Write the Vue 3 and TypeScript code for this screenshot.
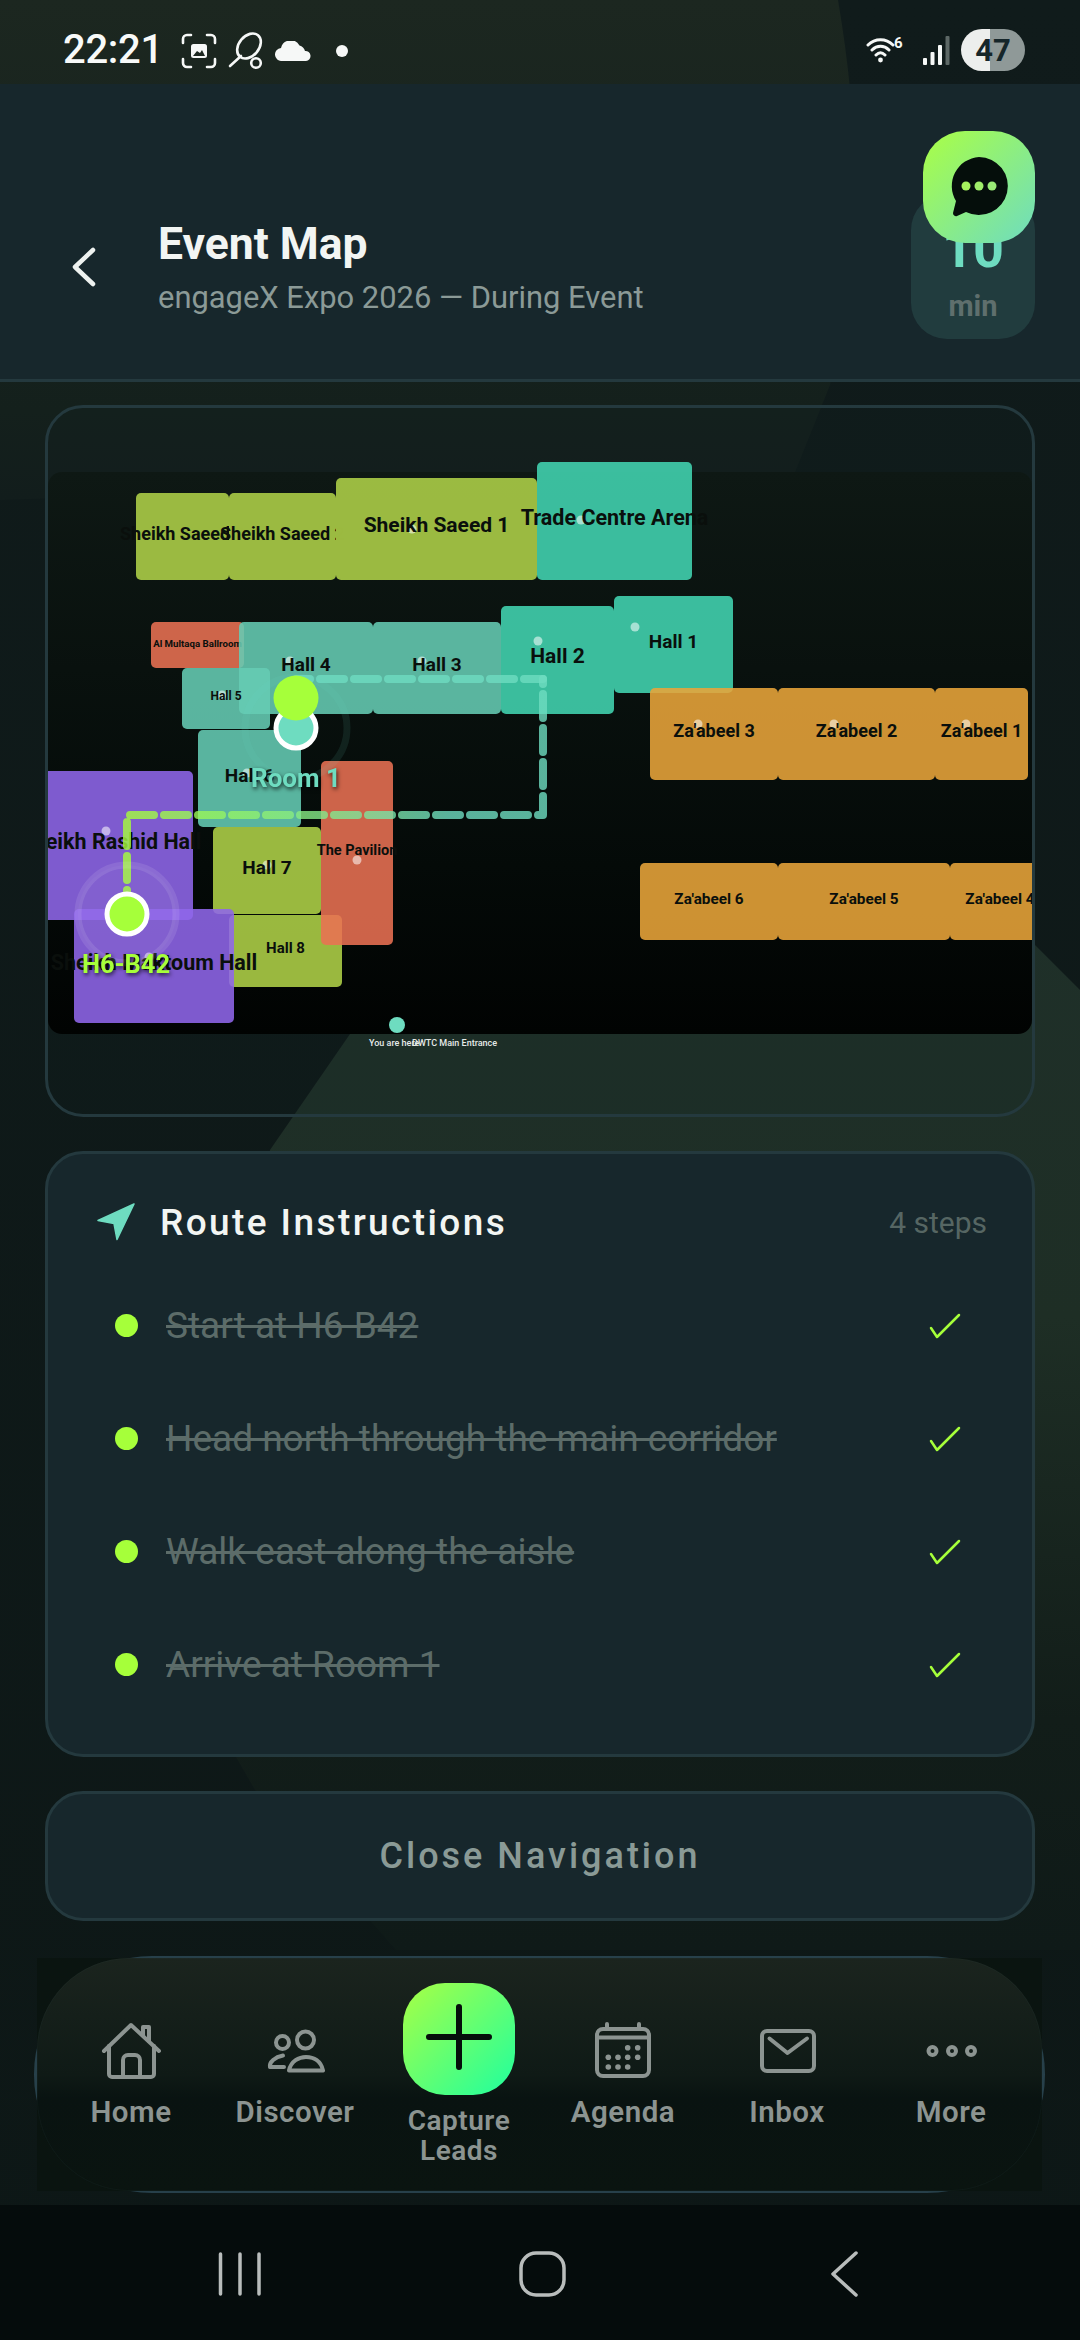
<script setup lang="ts">
interface Hall { n: string; x: number; y: number; w: number; h: number; c: string; s: number; dx?: number; dy?: number }
const OL = '#afd148', T1 = '#65ccb4', T2 = '#42d5b2', RD = '#e97153', PU = '#9066eb', AM = '#e9a53a'
const halls: Hall[] = [
  { n: 'Sheikh Saeed 3', x: 136, y: 493, w: 93, h: 87, c: OL, s: 18, dx: -999 },
  { n: 'Sheikh Saeed 2', x: 229, y: 493, w: 107, h: 87, c: OL, s: 18, dx: -999 },
  { n: 'Sheikh Saeed 1', x: 336, y: 478, w: 201, h: 102, c: OL, s: 21, dx: 412, dy: 529 },
  { n: 'Trade Centre Arena', x: 537, y: 462, w: 155, h: 118, c: T2, s: 21.5, dx: 581, dy: 520 },
  { n: 'Hall 1', x: 614, y: 596, w: 119, h: 97, c: T2, s: 19, dx: 635, dy: 627 },
  { n: 'Hall 2', x: 501, y: 606, w: 113, h: 108, c: T2, s: 21, dx: 538, dy: 641 },
  { n: 'Hall 3', x: 373, y: 622, w: 128, h: 92, c: T1, s: 19, dx: 422, dy: 661 },
  { n: 'Al Multaqa Ballroom', x: 151, y: 622, w: 93, h: 46, c: RD, s: 9.7, dx: -999 },
  { n: 'Hall 4', x: 239, y: 622, w: 134, h: 92, c: T1, s: 19, dx: 290, dy: 661 },
  { n: 'Hall 5', x: 182, y: 668, w: 88, h: 61, c: T1, s: 12, dx: 222, dy: 695 },
  { n: 'Hall 6', x: 198, y: 730, w: 103, h: 97, c: T1, s: 19, dx: 247, dy: 773 },
  { n: 'Sheikh Rashid Hall', x: 29, y: 771, w: 164, h: 149, c: PU, s: 21.5, dx: 106, dy: 831 },
  { n: 'Hall 7', x: 213, y: 827, w: 108, h: 87, c: OL, s: 19, dx: 267, dy: 865 },
  { n: 'Hall 8', x: 229, y: 915, w: 113, h: 72, c: OL, s: 15, dx: -999 },
  { n: 'The Pavilion', x: 321, y: 761, w: 72, h: 184, c: RD, s: 14.5, dx: 357, dy: 860 },
  { n: 'Sheikh Maktoum Hall', x: 74, y: 909, w: 160, h: 114, c: PU, s: 21.5, dx: 149, dy: 957 },
  { n: "Za'abeel 3", x: 650, y: 688, w: 128, h: 92, c: AM, s: 18, dx: 698, dy: 724 },
  { n: "Za'abeel 2", x: 778, y: 688, w: 157, h: 92, c: AM, s: 18, dx: 834, dy: 724 },
  { n: "Za'abeel 1", x: 935, y: 688, w: 93, h: 92, c: AM, s: 18, dx: 966, dy: 724 },
  { n: "Za'abeel 6", x: 640, y: 863, w: 138, h: 77, c: AM, s: 15.3, dx: -999 },
  { n: "Za'abeel 5", x: 778, y: 863, w: 172, h: 77, c: AM, s: 15.3, dx: -999 },
  { n: "Za'abeel 4", x: 950, y: 863, w: 100, h: 77, c: AM, s: 15.3, dx: -999 }
]
const steps = ['Start at H6-B42', 'Head north through the main corridor', 'Walk east along the aisle', 'Arrive at Room 1']
const calDots = [[34.7,25.7],[44.7,25.7],[15.3,35.3],[25,35.3],[34.7,35.3],[44.7,35.3],[15.3,45],[25,45],[34.7,45]]
</script>

<template>
  <div class="screen">
    <svg class="backdrop" width="1080" height="2340" viewBox="0 0 1080 2340" aria-hidden="true">
      <defs>
        <linearGradient id="bgTop" x1="0" y1="0" x2="0" y2="1">
          <stop offset="0" stop-color="#1c2720" />
          <stop offset="0.82" stop-color="#14201c" />
          <stop offset="1" stop-color="#121d1c" />
        </linearGradient>
        <linearGradient id="bgLow" x1="0" y1="0" x2="0" y2="1">
          <stop offset="0" stop-color="#1f302a" />
          <stop offset="0.45" stop-color="#1e2e25" />
          <stop offset="0.8" stop-color="#121d19" />
          <stop offset="1" stop-color="#0f1a18" />
        </linearGradient>
        <linearGradient id="bgLeft" x1="0" y1="0" x2="0" y2="1">
          <stop offset="0" stop-color="#101b1b" />
          <stop offset="1" stop-color="#0d1716" />
        </linearGradient>
      </defs>
      <rect width="1080" height="2340" fill="url(#bgLeft)" />
      <path d="M0 0H838Q860 130 852 220T830 385L795 472L0 500Z" fill="url(#bgTop)" />
      <path d="M1080 990L1035 945L800 800L350 1034L270 1150C240 1400 225 1650 236 1757L255 1790L396 1950H1080Z" fill="url(#bgLow)" />
    </svg>

    <div class="status">
      <div class="status-left">
        <span class="clock">22:21</span>
        <svg class="st-frame" width="36" height="36" viewBox="0 0 36 36" fill="none" stroke="#f6f8f7" stroke-width="2.6" stroke-linecap="round">
          <path d="M2 10V6a4 4 0 0 1 4-4h4M26 2h4a4 4 0 0 1 4 4v4M34 26v4a4 4 0 0 1-4 4h-4M10 34H6a4 4 0 0 1-4-4v-4" />
          <rect x="10" y="11" width="16" height="14" rx="2.5" fill="#f6f8f7" stroke="none" />
          <path d="M12 23l4-5 3 2 2-3 3 6z" fill="#1c2720" stroke="none" />
        </svg>
        <svg class="st-racket" width="36" height="38" viewBox="0 0 36 38" fill="none" stroke="#f6f8f7" stroke-width="2.6" stroke-linecap="round">
          <ellipse cx="21" cy="14" rx="14" ry="10" transform="rotate(-50 21 14)" />
          <path d="M13 24L2 34" />
          <circle cx="28" cy="31" r="4.8" />
        </svg>
        <svg class="st-cloud" width="36" height="20" viewBox="0 0 36 20" fill="#f6f8f7">
          <path d="M7 20a6.500 6.500 0 0 1-1-13 10 10 0 0 1 18.500-2.500A8 8 0 0 1 30 10a5 5 0 0 1 1 10z" />
        </svg>
        <span class="st-dot"></span>
      </div>
      <div class="status-right">
        <svg width="44" height="28" viewBox="0 0 44 28" fill="none" stroke="#f6f8f7" stroke-width="3" stroke-linecap="round">
          <path d="M2 9C9 2 20 2 27 9M6 14C11 9 18 9 23 14M10 19C13 16 16 16 19 19" />
          <circle cx="14.500" cy="24" r="2.400" fill="#f6f8f7" stroke="none" />
          <text x="28" y="12" class="wifi-six">6</text>
        </svg>
        <svg class="st-signal" width="28" height="30" viewBox="0 0 28 30">
          <rect x="1" y="23" width="4" height="7" rx="1" fill="#f6f8f7" />
          <rect x="8.500" y="17" width="4" height="13" rx="1" fill="#f6f8f7" />
          <rect x="16" y="10" width="4" height="20" rx="1" fill="#f6f8f7" />
          <rect x="23.500" y="1" width="4" height="29" rx="1" fill="#5d6866" />
        </svg>
        <div class="battery"><span>47</span></div>
      </div>
    </div>

    <header class="head">
      <svg class="back" width="26" height="40" viewBox="0 0 26 40" fill="none" stroke="#eef2f0" stroke-width="4.500" stroke-linecap="round" stroke-linejoin="round">
        <path d="M22 3L4 20L22 37" />
      </svg>
      <div class="titles">
        <h1>Event Map</h1>
        <p>engageX Expo 2026 — During Event</p>
      </div>
      <div class="timer">
        <strong>10</strong>
        <span>min</span>
      </div>
    </header>

    <button class="fab" aria-label="Chat">
      <svg width="112" height="112" viewBox="0 0 112 112">
        <path d="M56 26a29 29 0 1 1-13 55l-9 4a3 3 0 0 1-4-3l3-12A29 29 0 0 1 56 26z" fill="#050e0b" />
        <circle cx="43" cy="55" r="4.500" fill="#a6f25e" />
        <circle cx="56" cy="55" r="4.500" fill="#a0ee6a" />
        <circle cx="69" cy="55" r="4.500" fill="#9aea76" />
      </svg>
    </button>

    <main class="content">
      <section class="card map-card">
        <svg class="map" width="984" height="652" viewBox="48 462 984 652">
          <defs>
            <linearGradient id="mapBg" x1="0" y1="0" x2="0" y2="1">
              <stop offset="0" stop-color="#0e1814" />
              <stop offset="0.7" stop-color="#040a08" />
              <stop offset="1" stop-color="#010302" />
            </linearGradient>
            <linearGradient id="routeGrad" gradientUnits="userSpaceOnUse" x1="127" y1="0" x2="450" y2="0">
              <stop offset="0" stop-color="#a6ff3a" />
              <stop offset="1" stop-color="#6edcc0" />
            </linearGradient>
          </defs>
          <rect x="48" y="472" width="984" height="562" rx="14" fill="url(#mapBg)" />
          <g v-for="h in halls" :key="h.n">
            <rect :x="h.x" :y="h.y" :width="h.w" :height="h.h" rx="5" :fill="h.c" fill-opacity="0.88" />
            <circle v-if="h.dx !== -999" :cx="h.dx" :cy="h.dy" r="4.500" fill="#fff" fill-opacity="0.55" />
            <text
              class="hall-label"
              :x="h.x + h.w / 2"
              :y="h.y + h.h / 2 - h.s * 0.18"
              :font-size="h.s"
            >{{ h.n }}</text>
          </g>
          <path d="M127 914V815H543V679" fill="none" stroke="url(#routeGrad)" stroke-opacity="0.8" stroke-width="8" stroke-linecap="round" stroke-linejoin="round" stroke-dasharray="24 10" />
          <path d="M543 679H296V728" fill="none" stroke="#6edcc0" stroke-opacity="0.8" stroke-width="8" stroke-linecap="round" stroke-linejoin="round" stroke-dasharray="24 10" stroke-dashoffset="5" />
          <circle cx="296" cy="728" r="51" fill="none" stroke="#6edcc0" stroke-opacity="0.1" stroke-width="7" />
          <circle cx="296" cy="728" r="20" fill="#6edcc0" stroke="#fff" stroke-width="5" />
          <circle cx="296" cy="698" r="22.500" fill="#a6ff3a" />
          <circle cx="127" cy="914" r="49" fill="#fff" fill-opacity="0.03" stroke="#fff" stroke-opacity="0.1" stroke-width="7" />
          <circle cx="127" cy="914" r="20" fill="#a6ff3a" stroke="#fff" stroke-width="5" />
          <text class="pin-label room" x="296" y="778">Room 1</text>
          <text class="pin-label start" x="126" y="964">H6-B42</text>
          <circle cx="397" cy="1025" r="8" fill="#6edcc0" />
          <text class="tiny" x="369" y="1046">You are here</text>
          <text class="tiny" x="412" y="1046">DWTC Main Entrance</text>
        </svg>
      </section>

      <section class="card route-card">
        <div class="route-head">
          <svg class="route-arrow" width="38" height="38" viewBox="0 0 38 38">
            <path d="M37 1L1 17.500L17 20.500L20 36.500Z" fill="#6edcc0" stroke="#6edcc0" stroke-width="1.500" stroke-linejoin="round" />
          </svg>
          <h2>Route Instructions</h2>
          <span class="step-count">4 steps</span>
        </div>
        <ul class="steps">
          <li v-for="s in steps" :key="s">
            <i class="step-dot"></i>
            <span class="step-text">{{ s }}</span>
            <svg class="tick" width="32" height="26" viewBox="0 0 32 26" fill="none" stroke="#a6ff3a" stroke-width="2.500" stroke-linecap="round" stroke-linejoin="round">
              <path d="M2 15L8 24L30 2" />
            </svg>
          </li>
        </ul>
      </section>

      <button class="card close-btn">Close Navigation</button>
    </main>

    <nav class="tabbar">
      <div class="tabbar-plate">
        <div class="tabbar-inner">
          <div class="tab">
            <svg class="tab-icon" width="60" height="60" viewBox="0 0 60 60" fill="none" stroke="#8c9491" stroke-width="4" stroke-linecap="round" stroke-linejoin="round">
              <path d="M3 29L30 3L58 29" />
              <path d="M8 24V52a3 3 0 0 0 3 3H50a3 3 0 0 0 3-3V24" />
              <path d="M22 55V38a5 5 0 0 1 5-5h7a5 5 0 0 1 5 5V55" />
              <path d="M42 13V5h6V19" />
            </svg>
            <span>Home</span>
          </div>
          <div class="tab">
            <svg class="tab-icon" width="60" height="60" viewBox="0 0 60 60" fill="none" stroke="#8c9491" stroke-width="4" stroke-linecap="round" stroke-linejoin="round">
              <circle cx="17.500" cy="20.500" r="6.500" />
              <circle cx="40.500" cy="18" r="8.500" />
              <path d="M24 48.500C26 39 34 35 41 35C49 35 56 39 58 48.500Z" />
              <path d="M19 45H5C4 40 10 35 18 33.500" />
            </svg>
            <span>Discover</span>
          </div>
          <div class="tab capture">
            <div class="plus">
              <svg width="112" height="112" viewBox="0 0 112 112" stroke="#050e0b" stroke-width="6" stroke-linecap="round">
                <path d="M56 24V84M26 54H86" />
              </svg>
            </div>
            <span>Capture<br />Leads</span>
          </div>
          <div class="tab">
            <svg class="tab-icon" width="60" height="60" viewBox="0 0 60 60" fill="none" stroke="#8c9491" stroke-width="4" stroke-linecap="round" stroke-linejoin="round">
              <rect x="4" y="7" width="52" height="47" rx="6" />
              <path d="M4 15.500H56M14 2V7M46 2V7" />
              <circle v-for="(d, i) in calDots" :key="i" :cx="d[0]" :cy="d[1]" r="2.800" fill="#8c9491" stroke="none" />
            </svg>
            <span>Agenda</span>
          </div>
          <div class="tab">
            <svg class="tab-icon" width="60" height="60" viewBox="0 0 60 60" fill="none" stroke="#8c9491" stroke-width="4" stroke-linecap="round" stroke-linejoin="round">
              <rect x="5" y="9" width="52" height="40" rx="5" />
              <path d="M12.500 16.500L30.500 31L50 16.500" />
            </svg>
            <span>Inbox</span>
          </div>
          <div class="tab">
            <svg class="tab-icon" width="60" height="60" viewBox="0 0 60 60" fill="none" stroke="#8c9491" stroke-width="4">
              <circle cx="11.500" cy="29" r="4" />
              <circle cx="31" cy="29" r="4" />
              <circle cx="50" cy="29" r="4" />
            </svg>
            <span>More</span>
          </div>
        </div>
      </div>
    </nav>

    <div class="sysnav">
      <svg width="1080" height="135" viewBox="0 0 1080 135" fill="none" stroke="#b9bdbc" stroke-width="3.500" stroke-linecap="round" stroke-linejoin="round">
        <path d="M220.500 49V89M240 49V89M259 49V89" />
        <rect x="521" y="48" width="43" height="42" rx="15" />
        <path d="M856 48L833 69L856 90" />
      </svg>
    </div>
  </div>
</template>

<style>
html, body { margin: 0; background: #0d1716; }
</style>

<style scoped>
.screen {
  position: relative;
  width: 1080px;
  height: 2340px;
  overflow: hidden;
  display: flex;
  flex-direction: column;
  font-family: Roboto, "Liberation Sans", sans-serif;
  color: #f2f5f3;
}
.backdrop { position: absolute; left: 0; top: 0; }
.status, .head, .content, .sysnav { position: relative; }

.status {
  height: 84px;
  flex: none;
  display: flex;
  align-items: center;
  justify-content: space-between;
  padding: 0 55px 0 63px;
  box-sizing: border-box;
}
.status-left { display: flex; align-items: center; }
.clock { font-size: 40px; font-weight: 500; letter-spacing: -0.3px; line-height: 84px; margin-top: 16px; color: #f8faf9; margin-right: 18px; }
.status-left svg { margin-top: 17px; }
.st-racket { margin-left: 11px; }
.st-cloud { margin-left: 11px; margin-top: 18px !important; }
.st-dot { width: 12px; height: 12px; border-radius: 50%; background: #f6f8f7; margin-left: 25px; margin-top: 18px; }
.status-right { display: flex; align-items: center; margin-top: 16px; }
.wifi-six { font: 700 15px Roboto, sans-serif; fill: #f6f8f7; stroke: none; }
.st-signal { margin-left: 12px; }
.battery {
  width: 64px;
  height: 42px;
  margin-left: 11px;
  border-radius: 21px;
  background: linear-gradient(90deg, #eceeed 0 45%, #8f9998 45% 100%);
  display: flex;
  align-items: center;
  justify-content: center;
  color: #16262a;
  font-size: 31px;
  font-weight: 700;
}

.head {
  height: 298px;
  flex: none;
  box-sizing: border-box;
  background: #17272c;
  border-bottom: 3px solid #24393e;
  display: flex;
  align-items: center;
  padding: 70px 45px 0 71px;
}
.back { flex: none; }
.titles { margin-left: 61px; flex: 1; }
h1 { margin: 0; font-size: 44.500px; line-height: 56px; font-weight: 700; color: #f2f5f3; }
.titles p { margin: 6px 0 0; font-size: 30.900px; line-height: 40px; color: #8b9a97; }
.timer {
  width: 124px;
  height: 145px;
  flex: none;
  border-radius: 36px;
  background: #213c3e;
  display: flex;
  flex-direction: column;
  align-items: center;
}
.timer strong { font-size: 54px; line-height: 60px; margin-top: 25px; font-weight: 700; color: #6edcc0; }
.timer span { font-size: 29px; line-height: 36px; margin-top: 9px; font-weight: 700; color: #5f6f6d; }

.fab {
  position: absolute;
  top: 131px;
  right: 45px;
  width: 112px;
  height: 112px;
  padding: 0;
  border: 0;
  border-radius: 42px;
  background: linear-gradient(135deg, #aaff44, #6edcc0);
}
.fab svg { display: block; }

.content {
  flex: 1;
  padding: 23px 45px 0;
  display: flex;
  flex-direction: column;
  gap: 34px;
}
.card {
  box-sizing: border-box;
  border: 3px solid #24393e;
  border-radius: 38px;
}
.map-card {
  height: 712px;
  padding-top: 54px;
  background: rgba(23, 39, 44, 0.1);
  overflow: hidden;
}
.map { display: block; }
.hall-label {
  font-weight: 700;
  fill: #0a0f0c;
  text-anchor: middle;
  dominant-baseline: central;
}
.pin-label {
  font-weight: 700;
  text-anchor: middle;
  dominant-baseline: central;
  filter: drop-shadow(1px 2px 2px rgba(0, 0, 0, 0.75));
}
.room { fill: #6edcc0; font-size: 26px; }
.start { fill: #a6ff3a; font-size: 25.500px; }
.tiny { font-size: 9px; font-weight: 500; fill: #e6eae8; }

.route-card { height: 606px; background: #17272c; padding: 46px 45px 0 49px; }
.route-head { display: flex; align-items: center; height: 44px; }
.route-arrow { flex: none; }
h2 { margin: 0 0 0 25px; flex: 1; font-size: 37px; font-weight: 500; letter-spacing: 2.400px; color: #f2f5f3; }
.step-count { font-size: 30px; color: #566663; }
.steps { list-style: none; margin: 25px 0 0; padding: 0; }
.steps li { height: 113px; display: flex; align-items: center; padding-left: 18px; }
.step-dot { width: 23px; height: 23px; border-radius: 50%; background: #a6ff3a; flex: none; }
.step-text { margin-left: 28px; flex: 1; font-size: 37px; color: #5c6c69; text-decoration: line-through; }
.tick { flex: none; margin-right: 26px; }

.close-btn {
  height: 130px;
  flex: none;
  background: #17272c;
  color: #8a9a96;
  font-family: inherit;
  font-size: 36px;
  font-weight: 500;
  letter-spacing: 3px;
}

.tabbar {
  position: absolute;
  left: 34px;
  top: 1956px;
  width: 1011px;
  height: 237px;
  box-sizing: border-box;
  border: 3px solid #27404a;
  border-radius: 118px;
  background: #0b1513;
}
.tabbar-plate {
  position: absolute;
  left: 0;
  top: -1px;
  width: 1005px;
  height: 233px;
  background: #0a1410;
}
.tabbar-inner {
  height: 100%;
  box-sizing: border-box;
  border-radius: 92px;
  background: linear-gradient(180deg, #1b241e 0%, #0f1a16 50%, #091311 60%, #0a1410 100%);
  display: grid;
  grid-template-columns: repeat(6, 164px);
  padding-left: 12px;
  box-shadow: inset 0 0 0 1px rgba(50, 75, 75, 0.12);
}
.tab {
  display: flex;
  flex-direction: column;
  align-items: center;
  padding-top: 64px;
  color: #8c9491;
  font-size: 29.500px;
  line-height: 30px;
  font-weight: 600;
  letter-spacing: 0.500px;
  text-align: center;
}
.tab-icon { display: block; margin-bottom: 15px; }
.capture { padding-top: 25px; font-size: 28px; }
.plus {
  width: 112px;
  height: 112px;
  border-radius: 42px;
  background: linear-gradient(135deg, #a8ff44, #1fff9f);
  margin-bottom: 11px;
}
.plus svg { display: block; }

.sysnav {
  height: 135px;
  flex: none;
  background: #050c0c;
}
.sysnav svg { display: block; }
</style>
